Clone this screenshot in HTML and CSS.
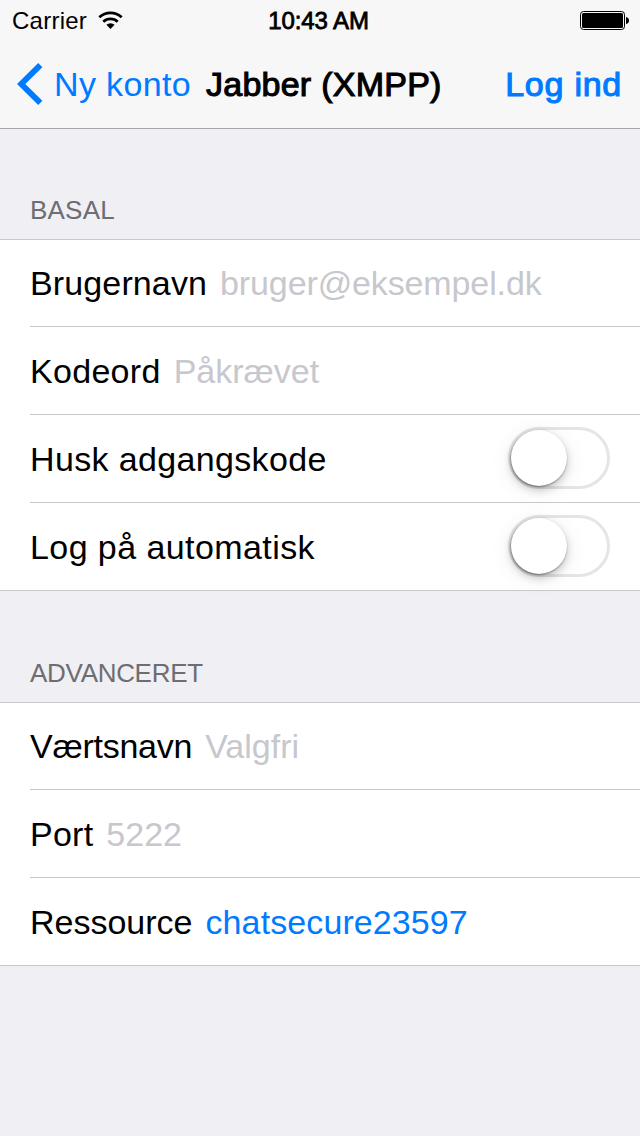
FILE: index.html
```
<!DOCTYPE html>
<html lang="da">
<head>
<meta charset="utf-8">
<title>Jabber (XMPP)</title>
<link rel="stylesheet" href="styles.css">
</head>
<body>
<header class="top">
  <div class="status">
    <div class="carrier"><span>Carrier</span>
      <svg width="25" height="18" viewBox="0 0 25 18"><g fill="none" stroke="#000" stroke-width="2.800"><path d="M1.300 6.200a16.500 16.500 0 0 1 22.400 0"/><path d="M5.300 10.700a10.600 10.600 0 0 1 14.400 0"/></g><path d="M12.500 18l-4.100-4.200a6 6 0 0 1 8.200 0z"/></svg>
    </div>
    <div class="time">10:43 AM</div>
    <svg class="battery" width="49" height="20" viewBox="0 0 49 20"><rect x=".5" y=".5" width="44" height="18" rx="3" fill="none" stroke="#000"/><rect x="2" y="2" width="41" height="15" rx="1.500"/><path d="M46 6q3 .5 3 3.500t-3 3.500z"/></svg>
  </div>
  <nav class="nav">
    <a class="back"><svg width="26" height="42" viewBox="0 0 26 42"><path d="M23.300 2.100L4.200 21l19.100 18.900" fill="none" stroke="#007aff" stroke-width="5.900"/></svg><span>Ny konto</span></a>
    <h1 class="title">Jabber (XMPP)</h1>
    <a class="login">Log ind</a>
  </nav>
</header>
<main>
  <h2 class="heading basic">BASAL</h2>
  <section class="group">
    <div class="row"><span class="label username">Brugernavn</span><span class="placeholder email">bruger@eksempel.dk</span></div>
    <div class="row"><span class="label password">Kodeord</span><span class="placeholder">Påkrævet</span></div>
    <div class="row"><span class="label remember">Husk adgangskode</span><span class="switch"></span></div>
    <div class="row"><span class="label auto">Log på automatisk</span><span class="switch"></span></div>
  </section>
  <h2 class="heading advanced">ADVANCERET</h2>
  <section class="group">
    <div class="row"><span class="label host">Værtsnavn</span><span class="placeholder">Valgfri</span></div>
    <div class="row"><span class="label port">Port</span><span class="placeholder">5222</span></div>
    <div class="row"><span class="label">Ressource</span><span class="value">chatsecure23597</span></div>
  </section>
</main>
</body>
</html>
```
FILE: styles.css
```
body{margin:0;width:640px;height:1136px;background:#efeff4;font:34px/40px "Liberation Sans",Arial,sans-serif;color:#000;overflow:hidden}
.top{height:128px;background:#f7f7f7;border-bottom:1px solid #a7a7aa}
.status{display:grid;grid-template-columns:1fr auto 1fr;height:40px;align-items:center;font-size:24px;padding:1px 11px 0 12px;box-sizing:border-box}
.carrier{display:flex;gap:11px;align-items:center;letter-spacing:.25px}
.carrier svg{margin-top:-2px}
.time{-webkit-text-stroke:.8px #000;letter-spacing:-.1px;margin-right:4px}
.battery{justify-self:end}
.nav{display:flex;height:88px;align-items:center;color:#007aff;padding:0 18px 0 17px}
.back{display:flex;align-items:center;gap:11px;letter-spacing:.35px}
.title{font-size:34px;font-weight:normal;margin:0 0 0 15px;color:#000;-webkit-text-stroke:1.1px #000;letter-spacing:.25px}
.login{-webkit-text-stroke:1.1px #007aff;letter-spacing:.75px;margin-left:auto}
.heading{box-sizing:border-box;margin:0;padding:61px 30px 0;font-size:26px;font-weight:normal;color:#6d6d72}
.basic{height:110px;letter-spacing:.2px}
.advanced{height:111px;padding-top:62px;letter-spacing:-.3px}
.group{background:#fff;border-top:1px solid #c8c7cc;border-bottom:1px solid #c8c7cc}
.row{display:flex;align-items:center;height:87px;margin-left:30px;padding-right:30px;border-bottom:1px solid #c8c7cc}
.row:first-child{height:86px}
.row:last-child{border:0}
.username{letter-spacing:.13px}
.password{letter-spacing:.3px}
.remember{letter-spacing:.35px}
.auto{letter-spacing:.42px}
.host{letter-spacing:-.25px}
.port{letter-spacing:.25px}
.email{letter-spacing:-.12px}
.placeholder{color:#c7c7cd;margin-left:13px}
.value{color:#007aff;margin-left:13px;letter-spacing:.1px}
.switch{box-sizing:border-box;width:102px;height:62px;border:3px solid #e5e5e5;border-radius:31px;margin:0 0 1px auto}
.switch::before{content:"";display:block;width:56px;height:56px;border-radius:50%;background:#fff;box-shadow:-.5px 1px 2px #0007,0 4px 8px #0003,0 4px 24px #00000014}
```
